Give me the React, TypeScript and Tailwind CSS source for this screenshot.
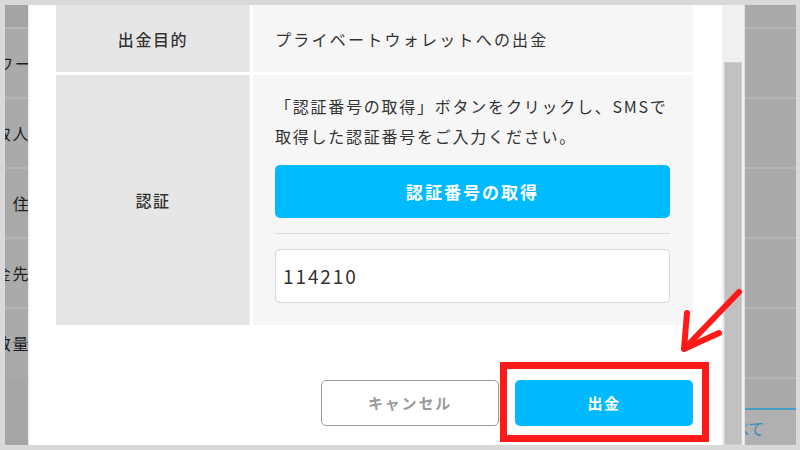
import React from "react";

const font = { fontFamily: '"Noto Sans CJK JP", "Noto Sans", sans-serif' };

function SideRows({ labels, align }: { labels: { t: string; m: string }[]; align: "left" | "right" }) {
  return (
    <div className="flex flex-col h-full bg-[#aaaaaa] overflow-hidden">
      <div className="h-[22px] shrink-0 bg-[#a4a4a4]" />
      {labels.map((l, i) => (
        <div
          key={i}
          className={
            "h-[70px] shrink-0 border-t-2 border-[#b4b4b4] flex items-center overflow-hidden " +
            (align === "right" ? "justify-end" : "justify-start")
          }
        >
          <span className={"whitespace-nowrap shrink-0 text-[16px] tracking-[0.1em] text-[#1f1f1f] " + l.m}>{l.t}</span>
        </div>
      ))}
      <div className="flex-1 bg-[#a6a6a6]" />
    </div>
  );
}

export default function App() {
  return (
    <div
      className="relative w-[800px] h-[450px] bg-[#d9d9d9] pt-[5px] pb-[5px] pl-[5px] pr-[4px] flex overflow-hidden"
      style={font}
    >
      {/* left background */}
      <div className="w-[23px] shrink-0 h-full">
        <SideRows
          align="right"
          labels={[
            { t: "ネットワーク", m: "mr-[-22px]" },
            { t: "受取人", m: "mr-[-2px]" },
            { t: "氏名、住所", m: "mr-[-20px]" },
            { t: "送金先", m: "mr-[-2px]" },
            { t: "数量", m: "mr-[-2px]" },
          ]}
        />
      </div>

      {/* modal */}
      <div className="w-[694px] shrink-0 h-full bg-white border-l border-[#e9e9e9] pl-[27px] pr-[29px] flex flex-col">
        <div className="flex flex-col gap-[3px]">
          <div className="flex h-[67px] gap-[3px]">
            <div className="w-[194px] shrink-0 bg-[#e6e6e6] flex items-center justify-center text-[16px] font-medium tracking-[0.1em] text-[#333]">
              出金目的
            </div>
            <div className="flex-1 bg-[#f6f6f6] pl-[22px] flex items-center text-[16px] tracking-[0.14em] text-[#333]">
              プライベートウォレットへの出金
            </div>
          </div>
          <div className="flex h-[250px] gap-[3px]">
            <div className="w-[194px] shrink-0 bg-[#e6e6e6] flex items-center justify-center text-[16px] font-medium tracking-[0.1em] text-[#333]">
              認証
            </div>
            <div className="flex-1 bg-[#f6f6f6] pl-[22px] pr-[23px] pt-[16px] flex flex-col">
              <p className="text-[16px] leading-[30px] tracking-[0.11em] text-[#333] whitespace-nowrap">
                「認証番号の取得」ボタンをクリックし、SMSで
                <br />
                取得した認証番号をご入力ください。
              </p>
              <div className="mt-[14px] h-[53px] rounded-[5px] bg-[#00bbff] flex items-center justify-center text-white font-bold text-[17px] tracking-[0.12em]">
                認証番号の取得
              </div>
              <div className="mt-[15px] h-px bg-[#dddddd]" />
              <div className="mt-[15px] h-[54px] rounded-[5px] border border-[#d8d8d8] bg-white pl-[7px] flex items-center text-[19px] tracking-[0.1em] text-[#333]">
                114210
              </div>
            </div>
          </div>
        </div>

        <div className="mt-[55px] flex justify-end gap-[16px]">
          <div className="w-[178px] h-[46px] rounded-[5px] border border-[#9a9a9a] flex items-center justify-center text-[15px] font-bold tracking-[0.12em] text-[#9a9a9a]">
            キャンセル
          </div>
          <div className="w-[178px] h-[46px] rounded-[5px] bg-[#00b9ff] flex items-center justify-center text-[15px] font-bold tracking-[0.1em] text-white">
            出金
          </div>
        </div>
      </div>

      {/* scrollbar track */}
      <div className="w-[22px] shrink-0 h-full bg-[#f0f0f0] flex flex-col px-[2px] pt-[57px]">
        <div className="flex-1 bg-[#c1c1c1] border border-[#cdcdcd]" />
      </div>
      <div className="w-px shrink-0 h-full bg-[#e2e2e2]" />

      {/* right background */}
      <div className="w-[51px] shrink-0 h-full flex flex-col bg-[#aaaaaa] overflow-hidden">
        <div className="h-[22px] shrink-0 bg-[#a9a9a9]" />
        <div className="h-[70px] shrink-0 border-t-2 border-[#b4b4b4]" />
        <div className="h-[70px] shrink-0 border-t-2 border-[#b4b4b4]" />
        <div className="h-[70px] shrink-0 border-t-2 border-[#b4b4b4]" />
        <div className="h-[70px] shrink-0 border-t-2 border-[#b4b4b4]" />
        <div className="h-[70px] shrink-0 border-t-2 border-[#b4b4b4]" />
        <div className="h-[31px] shrink-0 border-t-2 border-[#b4b4b4]" />
        <div className="flex-1 border-t-2 border-[#4a9ec6] bg-[#b0b0b0] flex items-center overflow-hidden">
          <span className="whitespace-nowrap shrink-0 ml-[-27px] text-[16px] text-[#3f8fc0]">すべて</span>
        </div>
      </div>

      {/* annotation: red box */}
      <div className="absolute left-[500px] top-[362px] w-[209px] h-[80px] border-[7px] border-[#ff1a1a]" />
      {/* annotation: arrow */}
      <svg className="absolute left-0 top-0" width="800" height="450" viewBox="0 0 800 450">
        <g stroke="#ff1a1a" strokeWidth="6" fill="none" strokeLinecap="round" strokeLinejoin="round">
          <line x1="739" y1="292" x2="687" y2="346" />
          <polyline points="687,313 684,349 719,333" />
        </g>
      </svg>
    </div>
  );
}
